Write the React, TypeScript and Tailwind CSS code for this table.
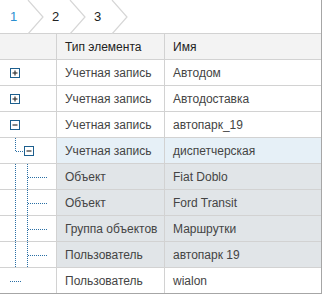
import React from "react";

type Tree = "plus" | "minus" | "childMinus" | "leaf" | "root";

const rows: { tree: Tree; type: string; name: string; bg: string }[] = [
    { tree: "plus", type: "Учетная запись", name: "Автодом", bg: "" },
    { tree: "plus", type: "Учетная запись", name: "Автодоставка", bg: "" },
    { tree: "minus", type: "Учетная запись", name: "автопарк_19", bg: "" },
    { tree: "childMinus", type: "Учетная запись", name: "диспетчерская", bg: "bg-[#e6f0f7]" },
    { tree: "leaf", type: "Объект", name: "Fiat Doblo", bg: "bg-[#e1e5e8]" },
    { tree: "leaf", type: "Объект", name: "Ford Transit", bg: "bg-[#e1e5e8]" },
    { tree: "leaf", type: "Группа объектов", name: "Маршрутки", bg: "bg-[#e1e5e8]" },
    { tree: "leaf", type: "Пользователь", name: "автопарк 19", bg: "bg-[#e1e5e8]" },
    { tree: "root", type: "Пользователь", name: "wialon", bg: "" },
];

const DOT = "#2a6fa5";

function Box({ x, minus }: { x: number; minus?: boolean }) {
    return (
        <g>
            <rect x={x + 0.5} y={8.5} width={9} height={9} fill="white" stroke="#1d5f8e" />
            <line x1={x + 2.5} y1={13} x2={x + 7.5} y2={13} stroke="#333" strokeWidth={1.2} />
            {!minus && <line x1={x + 5} y1={10.5} x2={x + 5} y2={15.5} stroke="#333" strokeWidth={1.2} />}
        </g>
    );
}

function TreeCell({ tree }: { tree: Tree }) {
    return (
        <svg width="56" height="25" viewBox="0 0 56 25">
            {tree === "plus" && <Box x={10} />}
            {tree === "minus" && <Box x={10} minus />}
            {tree === "childMinus" && (
                <>
                    <line x1={15.5} y1={0} x2={15.5} y2={13} stroke={DOT} strokeDasharray="1 1" />
                    <line x1={16} y1={13.5} x2={24} y2={13.5} stroke={DOT} strokeDasharray="1 1" />
                    <Box x={24} minus />
                </>
            )}
            {tree === "leaf" && (
                <>
                    <line x1={15.5} y1={0} x2={15.5} y2={25} stroke={DOT} strokeDasharray="1 1" />
                    <line x1={27.5} y1={0} x2={27.5} y2={25} stroke={DOT} strokeDasharray="1 1" />
                    <line x1={28} y1={13.5} x2={47} y2={13.5} stroke={DOT} strokeDasharray="1 1" />
                </>
            )}
            {tree === "root" && (
                <line x1={10} y1={13.5} x2={22} y2={13.5} stroke={DOT} strokeDasharray="1 1" />
            )}
        </svg>
    );
}

function Chevron() {
    return (
        <svg width="18" height="34" viewBox="0 0 18 34" className="shrink-0">
            <polyline points="1,0 16,17 1,34" fill="none" stroke="#d6d6d6" strokeWidth={1.2} />
        </svg>
    );
}

export default function App() {
    return (
        <div
            className="w-[322px] h-[294px] overflow-hidden bg-white border-r border-b border-[#a6a6a6] text-[12px] text-[#444]"
            style={{ fontFamily: '"Liberation Sans", Arial, sans-serif' }}
        >
            {/* breadcrumbs */}
            <div className="flex h-[34px] items-center border-b border-[#d2d2d2]">
                <span className="ml-[10px] w-[17px] text-[13px] text-[#2a8fd0]">1</span>
                <Chevron />
                <span className="ml-[7px] w-[17px] text-[13px] text-[#222]">2</span>
                <Chevron />
                <span className="ml-[7px] w-[17px] text-[13px] text-[#222]">3</span>
                <Chevron />
            </div>

            {/* table */}
            <div className="grid grid-cols-[57px_108px_1fr]">
                <div className="h-[26px] border-r border-b border-[#d2d2d2] bg-[#f3f3f3]" />
                <div className="flex h-[26px] items-center border-r border-b border-[#d2d2d2] bg-[#f3f3f3] pl-[8px] text-[#222]">
                    Тип элемента
                </div>
                <div className="flex h-[26px] items-center border-b border-[#d2d2d2] bg-[#f3f3f3] pl-[8px] text-[#222]">
                    Имя
                </div>

                {rows.map((r, i) => (
                    <React.Fragment key={i}>
                        <div className="h-[26px] border-r border-b border-[#d2d2d2]">
                            <TreeCell tree={r.tree} />
                        </div>
                        <div className={`flex h-[26px] items-center border-r border-b border-[#d2d2d2] pl-[8px] ${r.bg}`}>
                            {r.type}
                        </div>
                        <div className={`flex h-[26px] items-center border-b border-[#d2d2d2] pl-[8px] ${r.bg}`}>
                            {r.name}
                        </div>
                    </React.Fragment>
                ))}
            </div>
        </div>
    );
}
